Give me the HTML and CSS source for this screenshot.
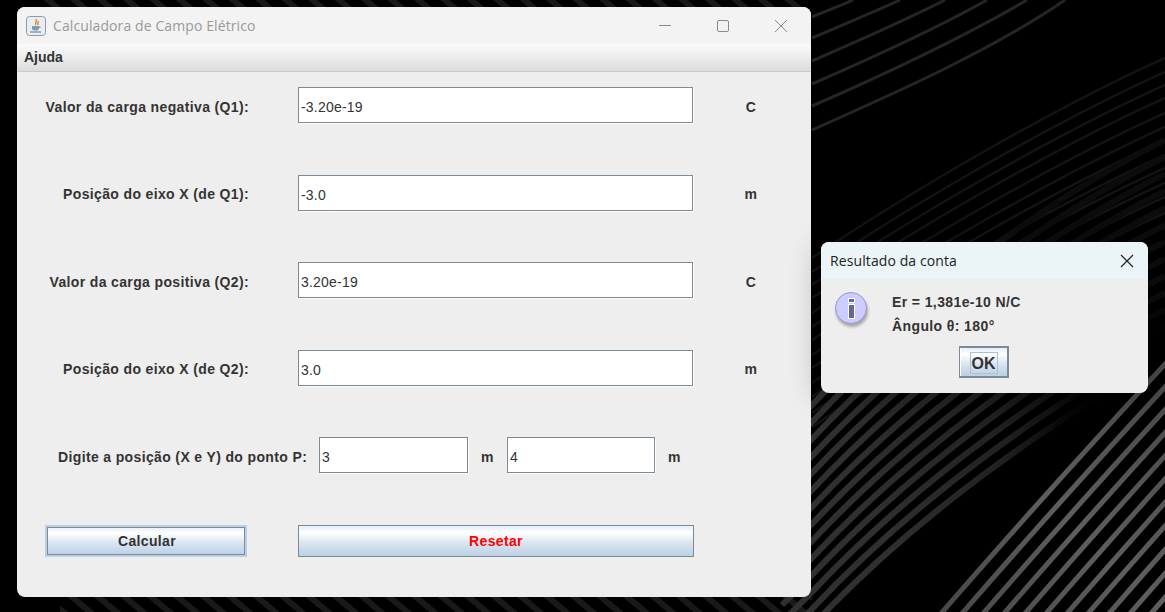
FILE: index.html
```html
<!DOCTYPE html>
<html lang="pt-BR">
<head>
    <meta charset="UTF-8">
    <meta name="viewport" content="width=device-width, initial-scale=1.0">
    <title>Calculadora de Campo Elétrico</title>
    <link rel="stylesheet" href="styles.css">
</head>
<body>
    <div class="desktop">
        <svg class="wallpaper" width="1165" height="612" viewBox="0 0 1165 612">
            <defs>
                <pattern id="hatch" width="17" height="17" patternUnits="userSpaceOnUse" patternTransform="rotate(40)">
                    <rect width="17" height="6" fill="#191919"/>
                </pattern>
                <linearGradient id="darkFade" gradientUnits="userSpaceOnUse" x1="1080" y1="400" x2="860" y2="480">
                    <stop offset="0" stop-color="#0c0c0c"/>
                    <stop offset="0.4" stop-color="#222"/>
                    <stop offset="1" stop-color="#303030"/>
                </linearGradient>
                <linearGradient id="brightFade" gradientUnits="userSpaceOnUse" x1="950" y1="612" x2="1165" y2="400">
                    <stop offset="0" stop-color="#484848"/>
                    <stop offset="0.5" stop-color="#5e5e5e"/>
                    <stop offset="1" stop-color="#4a4a4a"/>
                </linearGradient>
                <filter id="soft"><feGaussianBlur stdDeviation="12"/></filter>
            </defs>
            <rect width="1165" height="612" fill="#000"/>
            <rect x="40" y="0" width="770" height="8" fill="url(#hatch)"/>
            <rect x="60" y="596" width="752" height="16" fill="url(#hatch)"/>
            <path class="top-lines" d="M812 17c14 -6 28 -11 41 -17M812 38c30 -13 60 -25 88 -38M812 61c46 -20 92 -40 133 -61M812 84c62 -27 122 -54 175 -84M812 106c78 -34 150 -68 215 -106M812 130c90 -40 180 -80 253 -130"/>
            <path class="far-lines" d="M1165 58c-110 50 -250 130 -353 200M1165 72c-110 50 -250 130 -353 200M1165 85c-110 50 -250 130 -353 200M1165 98c-110 50 -250 130 -353 200M1165 113c-110 50 -250 130 -353 200M1165 127c-110 50 -250 130 -353 200M1165 140c-110 50 -250 130 -353 200M1165 155c-110 50 -250 130 -353 200M1165 168c-110 50 -250 130 -353 200M1165 183c-110 50 -250 130 -353 200M1165 197c-110 50 -250 130 -353 200M1165 213c-110 50 -250 130 -353 200M1165 227c-110 50 -250 130 -353 200"/>
            <path class="near-lines" d="M1165 140c-110 55 -250 155 -353 265l-30 30M1165 157c-110 55 -250 155 -353 265l-30 30M1165 174c-110 55 -250 155 -353 265l-30 30M1165 191c-110 55 -250 155 -353 265l-30 30M1165 208c-110 55 -250 155 -353 265l-30 30M1165 225c-110 55 -250 155 -353 265l-30 30M1165 242c-110 55 -250 155 -353 265l-30 30M1165 259c-110 55 -250 155 -353 265l-30 30M1165 276c-110 55 -250 155 -353 265l-30 30M1165 293c-110 55 -250 155 -353 265l-30 30M1165 310c-110 55 -250 155 -353 265l-30 30M1165 327c-110 55 -250 155 -353 265l-30 30M1165 344c-110 55 -250 155 -353 265l-30 30M1165 361c-110 55 -250 155 -353 265l-30 30"/>
            <path class="shade" d="M905 640L1005 525L1105 410L1180 325"/>
            <path class="bright-lines" d="M925 632C1000 545 1090 445 1180 348M946 632C1021 545 1111 445 1201 348M967 632C1042 545 1132 445 1222 348M988 632C1063 545 1153 445 1243 348M1009 632C1084 545 1174 445 1264 348M1030 632C1105 545 1195 445 1285 348M1051 632C1126 545 1216 445 1306 348M1072 632C1147 545 1237 445 1327 348M1093 632C1168 545 1258 445 1348 348M1114 632C1189 545 1279 445 1369 348M1135 632C1210 545 1300 445 1390 348M1156 632C1231 545 1321 445 1411 348"/>
        </svg>

        <div class="window main-window">
            <div class="titlebar">
                <svg class="app-icon" width="20" height="20" viewBox="0 0 20 20">
                    <rect x="0.5" y="0.5" width="19" height="19" rx="3" fill="#e9eef2" stroke="#8b9bab"/>
                    <path d="M10 3c2 2 -2 3 0 6M12 5c1 1 -1 2 0 4" fill="none" stroke="#e8832a" stroke-width="1.5"/>
                    <path d="M6 10h7v2.500c0 1.500 -1.500 2 -3.500 2s-3.500 -.5 -3.500 -2zM13 10.500h1.500v1.500h-1.500" fill="#7e9bb5"/>
                    <path d="M4 16h11" stroke="#4f7594" stroke-width="1.200"/>
                </svg>
                <span class="window-title">Calculadora de Campo Elétrico</span>
                <div class="window-controls">
                    <svg width="14" height="14" viewBox="0 0 14 14"><path d="M1 6.500h12" stroke="#8a8a8a"/></svg>
                    <svg width="14" height="14" viewBox="0 0 14 14"><rect x="1.500" y="1.500" width="11" height="11" rx="1.500" fill="none" stroke="#8a8a8a"/></svg>
                    <svg width="14" height="14" viewBox="0 0 14 14"><path d="M1 1l12 12M13 1l-12 12" stroke="#8a8a8a"/></svg>
                </div>
            </div>
            <div class="menubar"><span class="menu-item">Ajuda</span></div>
            <div class="form">
                <div class="form-row">
                    <label class="field-label">Valor da carga negativa (Q1):</label>
                    <div class="field field-wide">-3.20e-19</div>
                    <span class="unit">C</span>
                </div>
                <div class="form-row">
                    <label class="field-label">Posição do eixo X (de Q1):</label>
                    <div class="field field-wide">-3.0</div>
                    <span class="unit">m</span>
                </div>
                <div class="form-row">
                    <label class="field-label">Valor da carga positiva (Q2):</label>
                    <div class="field field-wide">3.20e-19</div>
                    <span class="unit">C</span>
                </div>
                <div class="form-row">
                    <label class="field-label">Posição do eixo X (de Q2):</label>
                    <div class="field field-wide">3.0</div>
                    <span class="unit">m</span>
                </div>
                <div class="point-row">
                    <label class="point-label">Digite a posição (X e Y) do ponto P:</label>
                    <div class="field field-x">3</div>
                    <span class="point-unit">m</span>
                    <div class="field field-y">4</div>
                    <span class="point-unit">m</span>
                </div>
                <div class="button-row">
                    <button class="btn btn-calc">Calcular</button>
                    <button class="btn btn-reset">Resetar</button>
                </div>
            </div>
        </div>

        <div class="window dialog">
            <div class="dialog-title">
                <span>Resultado da conta</span>
                <svg width="14" height="14" viewBox="0 0 14 14"><path d="M1 1l12 12M13 1l-12 12" stroke="#222" stroke-width="1.200"/></svg>
            </div>
            <div class="dialog-body">
                <div class="dialog-message">
                    <div class="info-icon"><span class="info-dot"></span><span class="info-stem"></span></div>
                    <div class="dialog-text">
                        <p>Er = 1,381e-10 N/C</p>
                        <p>Ângulo θ: 180°</p>
                    </div>
                </div>
                <button class="btn btn-ok"><span class="focus-box">OK</span></button>
            </div>
        </div>
    </div>
</body>
</html>
```

FILE: styles.css
```css
* {
    box-sizing: border-box;
}
body {
    margin: 0;
    background: #000;
    font-family: "Liberation Sans", Arial, sans-serif;
    overflow: hidden;
}
.desktop {
    position: relative;
    width: 1165px;
    height: 612px;
    overflow: hidden;
}
.wallpaper {
    position: absolute;
    top: 0;
    left: 0;
}
.top-lines, .far-lines, .near-lines, .bright-lines, .shade {
    fill: none;
}
.top-lines {
    stroke: #252525;
    stroke-width: 3;
}
.far-lines {
    stroke: #131313;
    stroke-width: 2.5;
}
.near-lines {
    stroke: url(#darkFade);
    stroke-width: 6;
}
.shade {
    stroke: #000;
    stroke-width: 50;
    filter: url(#soft);
}
.bright-lines {
    stroke: url(#brightFade);
    stroke-width: 5;
}

/* janelas */
.window {
    position: absolute;
    background: #eeeeee;
    overflow: hidden;
}
.main-window {
    left: 17px;
    top: 7px;
    width: 794px;
    height: 590px;
    border-radius: 8px;
}
.titlebar {
    display: flex;
    align-items: center;
    height: 37px;
    padding-left: 9px;
    background: #f3f3f3;
}
.app-icon {
    margin-right: 7px;
}
.window-title {
    font-family: "Open Sans", sans-serif;
    font-size: 14px;
    letter-spacing: 0.1px;
    color: #999;
}
.window-controls {
    display: flex;
    gap: 44px;
    margin-left: auto;
    margin-right: 23px;
}
.menubar {
    height: 28px;
    padding: 4px 7px 0;
    background: linear-gradient(#fbfbfb, #f2f2f2 30%, #dddddd);
    border-bottom: 1px solid #c9c9c9;
}
.menu-item {
    font-size: 14px;
    font-weight: bold;
    color: #333;
}

/* formulario */
.form {
    display: flex;
    flex-direction: column;
    gap: 51.5px;
    padding-top: 15px;
}
.form-row {
    display: grid;
    grid-template-columns: 232px 444px 116px;
    align-items: center;
    height: 36px;
}
.field-label, .point-label, .unit, .point-unit {
    padding-top: 3px;
    font-size: 14px;
    font-weight: bold;
    letter-spacing: 0.36px;
    color: #333;
}
.field-label {
    text-align: right;
}
.field-wide {
    margin-left: 49px;
    width: 395px;
}
.unit {
    text-align: center;
}
.field {
    height: 36px;
    padding-left: 2px;
    line-height: 38px;
    font-size: 14px;
    letter-spacing: 0.2px;
    color: #333;
    background: #fff;
    border: 1px solid #7a8a99;
    box-shadow: 1px 1px 0 #fff;
}
.point-row {
    display: flex;
    align-items: center;
    height: 36px;
    padding-left: 41px;
}
.point-label {
    width: 261px;
}
.field-x {
    width: 149px;
}
.field-y {
    width: 148px;
}
.point-unit {
    width: 39px;
    text-align: center;
}
.button-row {
    display: flex;
    gap: 51px;
    padding-left: 28px;
}
.btn {
    display: block;
    padding: 1px 0 0;
    font-family: inherit;
    font-size: 14px;
    font-weight: bold;
    letter-spacing: 0.36px;
    color: #333;
    border: 1px solid #7a8a99;
    background: linear-gradient(#e6eef7, #fff 22%, #dbe6f1 55%, #bcd0e5);
}
.btn-calc {
    width: 202px;
    height: 32px;
    padding-left: 2px;
    border: 2px solid #b8cfe5;
    box-shadow: inset 0 0 0 1px #7a8a99;
}
.btn-reset {
    width: 396px;
    height: 32px;
    color: #ff0000;
}

/* dialogo */
.dialog {
    left: 821px;
    top: 242px;
    width: 327px;
    height: 151px;
    border-radius: 8px;
    box-shadow: -2px 4px 30px rgba(0, 0, 0, 0.25);
}
.dialog-title {
    display: flex;
    justify-content: space-between;
    align-items: center;
    height: 37px;
    padding: 0 14px 0 9px;
    font-family: "Open Sans", sans-serif;
    font-size: 14px;
    letter-spacing: 0.1px;
    color: #222;
    background: #ebf5f7;
}
.dialog-body {
    display: flex;
    flex-direction: column;
}
.dialog-message {
    display: flex;
    padding: 13px 0 0 14px;
}
.info-icon {
    position: relative;
    flex: none;
    width: 32px;
    height: 32px;
    border-radius: 50%;
    background: #ccccff;
    border: 1px solid #9999cc;
    box-shadow: 1px 3px 3px rgba(0, 0, 0, 0.3);
}
.info-dot, .info-stem {
    position: absolute;
    left: 12px;
    width: 7px;
    background: #666699;
    border: 1px solid #fff;
}
.info-dot {
    top: 5px;
    height: 5px;
}
.info-stem {
    top: 11px;
    height: 15px;
}
.dialog-text {
    margin-left: 25px;
    font-size: 14px;
    font-weight: bold;
    letter-spacing: 0.39px;
    color: #333;
}
.dialog-text p {
    margin: 2px 0 8px;
    line-height: 16px;
}
.btn-ok {
    width: 50px;
    height: 32px;
    margin: 4px 0 0 138px;
    font-size: 16px;
    letter-spacing: 0;
    border: 2px solid #7a8a99;
    border-left-width: 1px;
    box-shadow: inset 1px 0 0 #fff;
}
.focus-box {
    display: inline-block;
    padding: 0 1px;
    height: 22px;
    line-height: 21px;
    border: 1px solid #a9c0d8;
}
```
